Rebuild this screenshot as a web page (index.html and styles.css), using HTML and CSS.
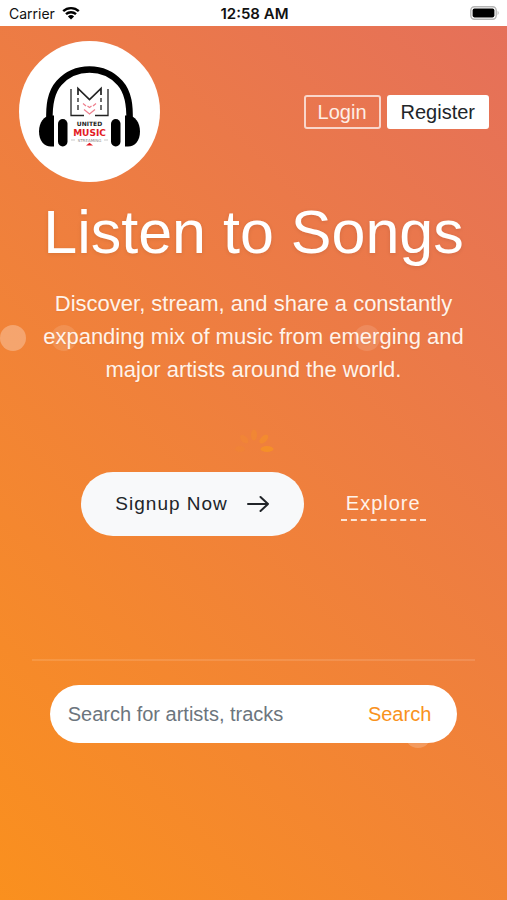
FILE: index.html
```html
<!DOCTYPE html>
<html lang="en">
<head>
    <meta charset="UTF-8">
    <meta name="viewport" content="width=device-width, initial-scale=1.0">
    <title>United Music Streaming</title>
    <link rel="stylesheet" href="styles.css">
</head>
<body>
    <div class="status-bar">
        <div class="carrier">
            <span>Carrier</span>
            <svg class="wifi" viewBox="0 0 18 14" aria-hidden="true">
                <path d="M1.2 5.2a11.3 11.3 0 0 1 15.6 0M4 8.2a7.2 7.2 0 0 1 10 0" fill="none" stroke="#000" stroke-width="2.4"/>
                <path d="M9 13.6L5.9 10.4a4.5 4.5 0 0 1 6.2 0z"/>
            </svg>
        </div>
        <div class="time">12:58 AM</div>
        <svg class="battery" viewBox="0 0 30 14" aria-hidden="true">
            <rect x="0.8" y="0.8" width="25.4" height="12.4" rx="3.6" fill="#fff" stroke="#b5b5b5" stroke-width="1.4"/>
            <rect x="2.6" y="2.6" width="21.8" height="8.8" rx="1.8"/>
            <path d="M27.6 4.8q2.2 2.2 0 4.4z" fill="#b5b5b5"/>
        </svg>
    </div>

    <div class="page">
        <span class="bubble bubble-left"></span>
        <span class="bubble bubble-mid"></span>
        <span class="bubble bubble-right"></span>
        <span class="bubble bubble-search"></span>

        <header class="header">
            <a href="#" class="logo" aria-label="United Music Streaming">
                <svg viewBox="0 0 141 141">
                    <!-- headphones -->
                    <path d="M30.500 80C30 66 31 52 40 42c8-9 19-13.500 30.500-13.500S93 33 101 42c9 10 10 24 9.500 38" fill="none" stroke="#000" stroke-width="6.500"/>
                    <path d="M35 74.500v31h-3c-7 0-12-6-12-15s5-16 12-16z"/>
                    <path d="M106 74.500v31h3c7 0 12-6 12-15s-5-16-12-16z"/>
                    <rect x="39" y="78" width="9.500" height="27.500" rx="4.700"/>
                    <rect x="92" y="78" width="9.500" height="27.500" rx="4.700"/>
                    <!-- monogram -->
                    <g fill="none" stroke="#222" stroke-width="1.300">
                        <path d="M52 48v26.500h13M89 48v26.500H76M59 57v4M59 64v5M82 57v4M82 64v5"/>
                        <path d="M59 54v-6.500l11.500 11 11.500-11V54" stroke-width="1.700"/>
                    </g>
                    <path d="M64 62.500l3 2.500M77 62.500l-3 2.500M68.500 65l2 1.500 2-1.500M65 68.500l5.500 4.500 5.500-4.500" fill="none" stroke="#ee7f8d" stroke-width="1.200"/>
                    <text x="70.500" y="84.500" class="logo-united">UNITED</text>
                    <text x="70.500" y="94.500" class="logo-music">MUSIC</text>
                    <text x="70.500" y="100.500" class="logo-streaming">STREAMING</text>
                    <path d="M52 99h4M85 99h4" stroke="#aaa" stroke-width="0.600"/>
                    <path d="M67 104.500l3.500-2.700 3.500 2.700z" fill="#e31b23"/>
                </svg>
            </a>
            <nav class="nav">
                <a href="#" class="btn btn-outline">Login</a>
                <a href="#" class="btn btn-white">Register</a>
            </nav>
        </header>

        <main class="content">
            <h1>Listen to Songs</h1>
            <p class="lead">Discover, stream, and share a constantly expanding mix of music from emerging and major artists around the world.</p>

            <svg class="loader" viewBox="0 0 42 42" aria-hidden="true">
                <g fill="#f99a1c">
                    <ellipse cx="34" cy="21" rx="6.500" ry="3" opacity="0.600"/>
                    <ellipse cx="35" cy="21" rx="5.500" ry="3" opacity="0.400" transform="rotate(-45 21 21)"/>
                    <ellipse cx="35" cy="21" rx="5.500" ry="3" opacity="0.250" transform="rotate(-90 21 21)"/>
                    <ellipse cx="35" cy="21" rx="5" ry="3" opacity="0.180" transform="rotate(-135 21 21)"/>
                    <ellipse cx="35" cy="21" rx="5" ry="3" opacity="0.120" transform="rotate(180 21 21)"/>
                </g>
            </svg>

            <div class="actions">
                <a href="#" class="signup">
                    Signup Now
                    <svg viewBox="0 0 24 20" aria-hidden="true">
                        <path d="M2 10h20M14.500 3L22 10l-7.500 7" fill="none" stroke="currentColor" stroke-width="2" stroke-linecap="round" stroke-linejoin="round"/>
                    </svg>
                </a>
                <a href="#" class="explore">Explore</a>
            </div>

            <hr class="divider">

            <form class="search">
                <input type="text" placeholder="Search for artists, tracks" aria-label="Search for artists, tracks">
                <button type="submit">Search</button>
            </form>
        </main>
    </div>
</body>
</html>
```
FILE: styles.css
```css
* {
    box-sizing: border-box;
}

body {
    margin: 0;
    min-height: 100vh;
    display: flex;
    flex-direction: column;
    font-family: "Liberation Sans", Arial, sans-serif;
    font-size: 20px;
    color: #fff;
}

a {
    color: inherit;
    text-decoration: none;
}

.status-bar {
    display: grid;
    grid-template-columns: 1fr auto 1fr;
    align-items: center;
    height: 26px;
    padding: 0 7px 0 9px;
    background-color: #fff;
    color: #111;
    font-family: Inter, sans-serif;
    font-size: 14px;
}

.carrier {
    display: flex;
    align-items: center;
    gap: 7px;
}

.wifi {
    width: 18px;
    height: 14px;
}

.time {
    font-size: 15px;
    font-weight: 600;
}

.battery {
    width: 30px;
    height: 14px;
    justify-self: end;
}

.page {
    position: relative;
    flex: 1;
    overflow: hidden;
    background: linear-gradient(45deg, #fa901e, #e5705a);
}

/* floating bubbles */
.bubble {
    position: absolute;
    width: 26px;
    height: 26px;
    border-radius: 50%;
    background-color: #fff;
    opacity: 0.12;
}

.bubble-left {
    top: 299px;
    left: 0;
    opacity: 0.28;
}

.bubble-mid {
    top: 299px;
    left: 51px;
}

.bubble-right {
    top: 299px;
    left: 354px;
}

.bubble-search {
    top: 696px;
    left: 405px;
    opacity: 0.2;
}

.header {
    display: flex;
    justify-content: space-between;
    align-items: center;
    padding: 15px 18px 0 19px;
}

.logo {
    width: 141px;
    height: 141px;
    border-radius: 50%;
    background-color: #fff;
}

.logo svg {
    display: block;
}

.logo text {
    text-anchor: middle;
    font-family: "DejaVu Sans", sans-serif;
}

.logo-united {
    font-size: 6px;
    font-weight: 700;
    fill: #222;
}

.logo-music {
    font-size: 9px;
    font-weight: 700;
    fill: #e31b23;
}

.logo-streaming {
    font-size: 4px;
    fill: #888;
}

.nav {
    display: flex;
    gap: 6px;
}

.btn {
    padding: 0 12px;
    border: 2px solid #fff;
    border-radius: 3px;
    line-height: 30px;
}

.btn-outline {
    border-color: rgba(255, 255, 255, 0.7);
    color: #fdeee6;
}

.btn-white {
    background-color: #fff;
    color: #212529;
}

.content {
    display: flex;
    flex-direction: column;
    align-items: center;
    padding: 13px 32px 40px;
    position: relative;
    text-align: center;
}

h1 {
    margin: 0;
    font-size: 61px;
    font-weight: 400;
    line-height: 74px;
    text-shadow: 0 1px 4px rgba(0, 0, 0, 0.1);
}

.lead {
    margin: 18px 0 0;
    font-size: 22px;
    line-height: 33px;
    color: #fff3ea;
    text-shadow: 0 1px 2px rgba(0, 0, 0, 0.05);
}

.loader {
    width: 42px;
    height: 42px;
    margin: 42px 0 2px;
}

.actions {
    display: flex;
    align-items: center;
    gap: 37px;
}

.signup {
    display: flex;
    align-items: center;
    gap: 18px;
    padding: 0 34px;
    border-radius: 32px;
    background-color: #f8f9fa;
    color: #212529;
    font-size: 19px;
    line-height: 64px;
    letter-spacing: 1px;
}

.signup svg {
    width: 24px;
    height: 20px;
}

.explore {
    padding: 0 5px;
    border-bottom: 2px dashed #fde6d6;
    line-height: 32px;
    letter-spacing: 1px;
    color: #fff3ea;
}

.divider {
    width: 100%;
    height: 2px;
    margin: 123px 0 24px;
    border: 0;
    background-color: rgba(255, 255, 255, 0.12);
}

.search {
    display: flex;
    align-items: center;
    width: 92%;
    height: 58px;
    padding: 0 26px 0 18px;
    border-radius: 29px;
    background-color: #fff;
}

.search input {
    flex: 1;
    min-width: 0;
    padding: 0;
    border: 0;
    outline: none;
    background: none;
    font: inherit;
    color: #212529;
}

.search input::placeholder {
    color: #6c757d;
    opacity: 1;
}

.search button {
    padding: 0;
    border: 0;
    background: none;
    font: inherit;
    color: #f9921d;
    cursor: pointer;
}
```
